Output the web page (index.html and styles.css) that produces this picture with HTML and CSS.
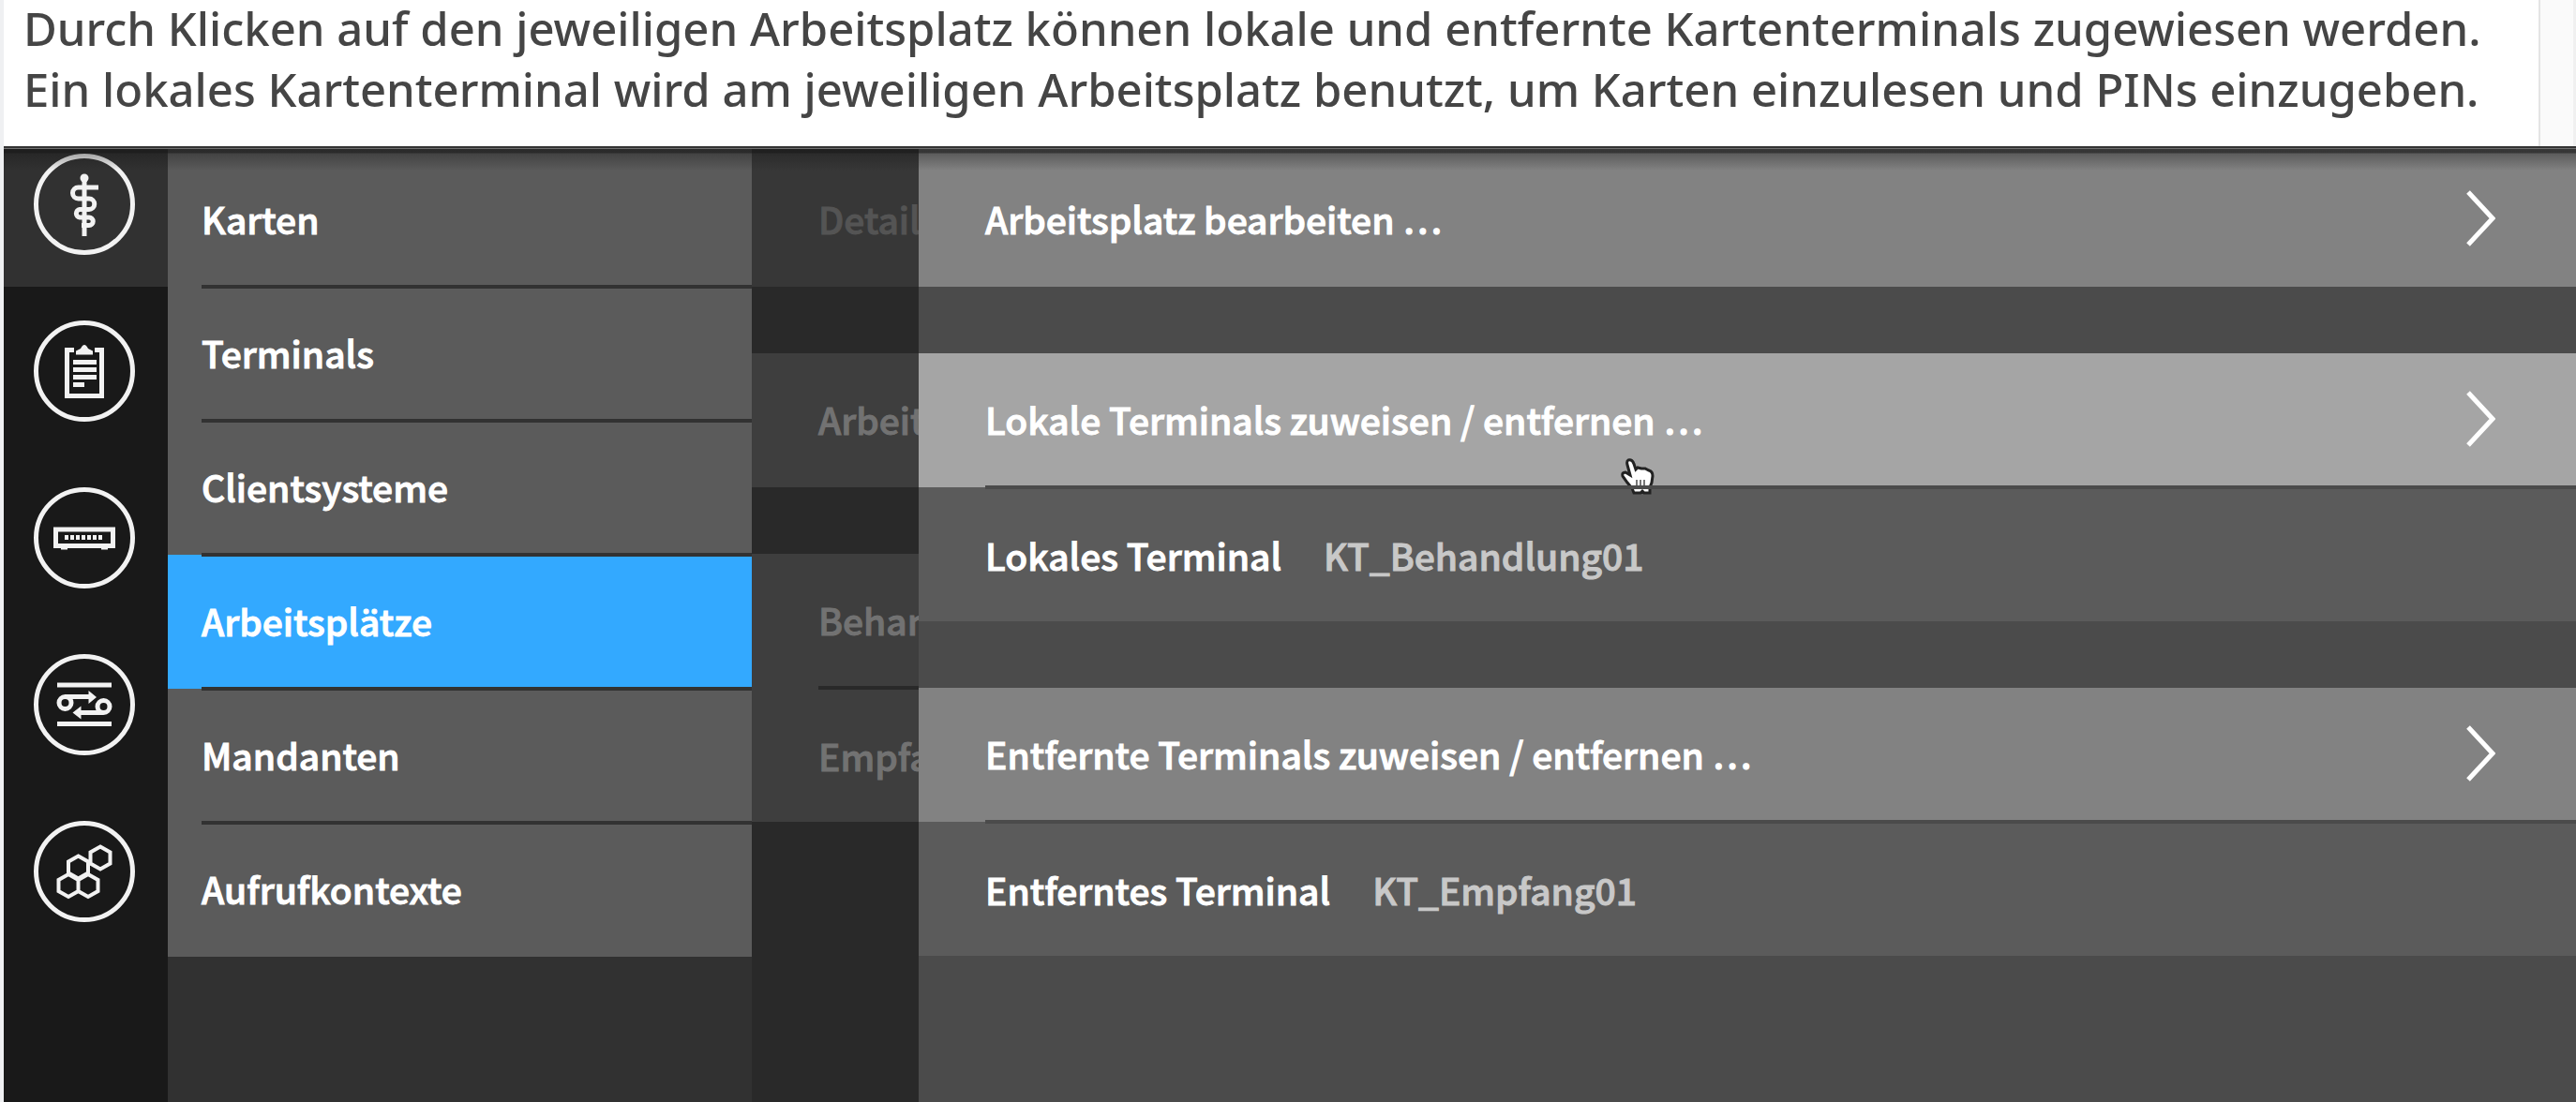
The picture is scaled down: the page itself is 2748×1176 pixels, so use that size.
FILE: index.html
```html
<!DOCTYPE html>
<html lang="de">
<head>
<meta charset="utf-8">
<title>Arbeitsplätze</title>
<link rel="stylesheet" href="styles.css">
</head>
<body>
<header class="intro">
  <p class="intro-text">Durch Klicken auf den jeweiligen Arbeitsplatz können lokale und entfernte Kartenterminals zugewiesen werden.<br>Ein lokales Kartenterminal wird am jeweiligen Arbeitsplatz benutzt, um Karten einzulesen und PINs einzugeben.</p>
  <div class="gutter"></div>
</header>
<div class="app">
  <nav class="rail" aria-label="Bereiche">
    <button class="rail-item active" aria-label="Praxis">
      <svg class="icon" viewBox="0 0 108 108"><circle cx="54" cy="54" r="51.500"/><circle class="fill" cx="54" cy="26" r="4.500"/><path d="M54 24V88M69 36H47.500a6 6 0 0 0 0 12H59a5.500 5.500 0 0 1 0 11.500H49a4.300 4.300 0 0 0 0 8.500H59a4.200 4.200 0 0 1 0 8.500H51"/></svg>
    </button>
    <button class="rail-item" aria-label="Aufgaben">
      <svg class="icon" viewBox="0 0 108 108"><circle cx="54" cy="54" r="51.500"/><path d="M43 31.500H35.500V80.500H72.500V31.500H65"/><path class="fill" d="M45 36.500V32.500L50 30Q54 22 58 30L63 32.500V36.500Z"/><path d="M42 44.500H67M42 52.500H67M42 60.500H67M42 68.500H54"/></svg>
    </button>
    <button class="rail-item" aria-label="Konnektor">
      <svg class="icon" viewBox="0 0 108 108"><circle cx="54" cy="54" r="51.500"/><rect x="23.500" y="45" width="61" height="17.500"/><path class="dots" d="M33 53.500H75"/><path d="M29 65H36M72 65H79" stroke-width="3"/></svg>
    </button>
    <button class="rail-item" aria-label="Verbindungen">
      <svg class="icon" viewBox="0 0 108 108"><circle cx="54" cy="54" r="51.500"/><path d="M25 33H83M25 74.500H83M33 45.500H60M74 62.500H49"/><circle cx="33.500" cy="52" r="6.500"/><circle cx="74.500" cy="56" r="6.500"/><path class="fill" d="M58.500 39L67 46L58.500 53ZM50.500 55.500L41.500 62.500L50.500 69.500Z"/></svg>
    </button>
    <button class="rail-item" aria-label="System">
      <svg class="icon" viewBox="0 0 108 108"><circle cx="54" cy="54" r="51.500"/><path class="hex" d="M37 57l10.500 6v12l-10.500 6l-10.500-6v-12zM58 57l10.500 6v12l-10.500 6l-10.500-6v-12zM47.500 37.500l10.500 6v12l-10.500 6l-10.500-6v-12zM71 27.500l10.500 6v12l-10.500 6l-10.500-6v-12z"/></svg>
    </button>
  </nav>
  <nav class="menu" aria-label="Praxis">
    <a class="row" href="#karten">Karten</a>
    <a class="row line" href="#terminals">Terminals</a>
    <a class="row line" href="#clientsysteme">Clientsysteme</a>
    <a class="row line selected" href="#arbeitsplaetze">Arbeitsplätze</a>
    <a class="row line" href="#mandanten">Mandanten</a>
    <a class="row line" href="#aufrufkontexte">Aufrufkontexte</a>
  </nav>
  <section class="behind">
    <div class="row heading">Detail</div>
    <div class="row spaced">Arbeit</div>
    <div class="row spaced">Behan</div>
    <div class="row line below">Empfa</div>
  </section>
  <main class="panel">
    <button class="row action">Arbeitsplatz bearbeiten …
      <svg class="chevron" viewBox="0 0 32 62"><path d="M3 3L29 31L3 59"/></svg>
    </button>
    <button class="row action spaced hover">Lokale Terminals zuweisen / entfernen …
      <svg class="chevron" viewBox="0 0 32 62"><path d="M3 3L29 31L3 59"/></svg>
      <svg class="cursor" viewBox="0 0 36 40"><path d="M8 2C11 1 13 3 14 6L16 12L18 10L22 11L26 11L30 13Q34 14 34 19L33 26L31 31V37H25L23 35L21 37H14L12 32L7 26L2 19Q1 15 5 15L10 18L7 7Q6 3 8 2Z"/><path class="lines" d="M17 23V31M21 23V31M25 23V31"/></svg>
    </button>
    <div class="row line below info"><span>Lokales Terminal</span><span class="value">KT_Behandlung01</span></div>
    <button class="row action spaced">Entfernte Terminals zuweisen / entfernen …
      <svg class="chevron" viewBox="0 0 32 62"><path d="M3 3L29 31L3 59"/></svg>
    </button>
    <div class="row line below info"><span>Entferntes Terminal</span><span class="value">KT_Empfang01</span></div>
  </main>
</div>
</body>
</html>
```
FILE: styles.css
```css
* { box-sizing: border-box; }

body {
  margin: 0;
  min-height: 100vh;
  display: flex;
  flex-direction: column;
  border-left: 4px solid #eff0f2;
  background: #fff;
  overflow-x: hidden;
}

.intro { display: flex; justify-content: space-between; }

.intro-text {
  margin: -2px 0 0;
  padding: 0 0 28px 21px;
  font: 500 49px/65px "Noto Sans", "Open Sans", sans-serif;
  color: #454545;
  white-space: nowrap;
}

.gutter {
  width: 40px;
  flex: none;
  background: #fafafa;
  border-left: 2px solid #e4e4e4;
  border-right: 3px solid #f0f0f0;
}

.app {
  position: relative;
  flex: 1;
  display: flex;
  font: 500 39px/60px "Noto Sans CJK SC", sans-serif;
  -webkit-text-stroke: 1px;
  color: #fff;
}

/* shadow cast by the window edge */
.app::after {
  content: "";
  position: absolute;
  inset: 0 0 auto 0;
  height: 26px;
  pointer-events: none;
  background: linear-gradient(#333 0 2px, #707070 2px 3px, rgba(22, 22, 22, .7) 3px 7px, rgba(22, 22, 22, .35) 8px, rgba(22, 22, 22, 0) 26px);
}

.rail {
  width: 175px;
  flex: none;
  background: #191919;
}

.rail-item {
  display: flex;
  align-items: center;
  justify-content: center;
  width: 100%;
  height: 178px;
  padding: 0 3px 0 0;
  border: 0;
  background: none;
}

.rail-item.active {
  height: 150px;
  padding-bottom: 27px;
  margin-bottom: 1px;
  background: #313131;
}

.icon {
  width: 108px;
  height: 108px;
  fill: none;
  stroke: #f2f2f2;
  stroke-width: 5;
}
.icon .fill { fill: #f2f2f2; stroke: none; }
.icon .dots { stroke-dasharray: 4 2; }
.icon .hex { stroke-width: 4; }

.menu { width: 623px; flex: none; background: #313131; }

.row {
  position: relative;
  display: flex;
  align-items: center;
  width: 100%;
  height: 143px;
  padding: 0 0 4px 71px;
  border: 0;
  background: #5b5b5b;
  color: inherit;
  font: inherit;
  text-align: left;
  text-decoration: none;
  white-space: nowrap;
}

.row:first-child { height: 150px; padding-top: 7px; }
.spaced { margin-top: 71px; }
.panel .below, .behind .below { padding-bottom: 0; }

.line::before {
  content: "";
  position: absolute;
  top: -2px;
  left: 71px;
  right: 0;
  height: 4px;
  background: #323232;
}

.menu .row { padding-left: 36px; }
.menu .line::before { left: 36px; }
.menu .selected { background: #33a9ff; }

.behind {
  width: 178px;
  flex: none;
  overflow: hidden;
  background: #292929;
  color: #727272;
}
.behind .row { background: #3e3e3e; }
.behind .heading { background: #373737; color: #545454; }
.behind .line::before { background: #292929; }

.panel { flex: 1; min-width: 0; background: #4b4b4b; }
.panel .action { background: #828282; }
.panel .hover { background: #a5a5a5; }
.panel .line::before { background: #4b4b4b; }
.info { gap: 45px; }
.value { color: #c8c8c8; }

.chevron {
  width: 32px;
  height: 62px;
  margin: 0 86px 0 auto;
  fill: none;
  stroke: #fff;
  stroke-width: 5;
}

.cursor {
  position: absolute;
  z-index: 1;
  left: 749px;
  top: 112px;
  width: 36px;
  height: 40px;
  fill: #fff;
  stroke: #222;
  stroke-width: 3;
}
.cursor .lines { stroke: #777; stroke-width: 2; }
.hover { z-index: 1; }

/* the row divider stays above the raised row */
.hover + .line { z-index: auto; }
.hover + .line::before { z-index: 1; }
```
